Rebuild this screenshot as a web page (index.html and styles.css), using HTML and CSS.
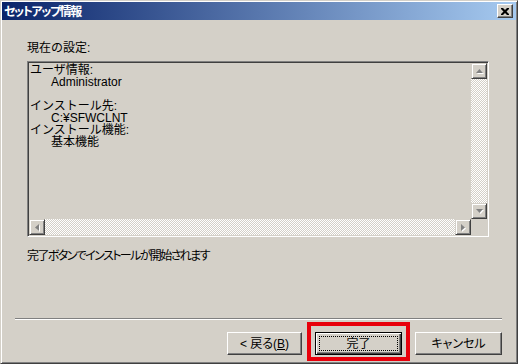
FILE: index.html
```html
<!DOCTYPE html>
<html lang="ja">
<head>
<meta charset="utf-8">
<title>セットアップ情報</title>
<link rel="stylesheet" href="styles.css">
</head>
<body>
<div class="window">
  <div class="titlebar">
    <span class="title">セットアップ情報</span>
    <span class="close"><svg width="8" height="7" viewBox="0 0 8 7"><path d="M0 0h2l2 2 2-2h2v1l-2.5 2.5L8 6v1H6L4 5 2 7H0V6l2.5-2.5L0 1z" fill="#000"/></svg></span>
  </div>
  <div class="main">
    <div class="label">現在の設定:</div>
    <div class="listbox">
      <div class="list-content">
        <div>ユーザ情報:</div>
        <div class="indent">Administrator</div>
        <div>&nbsp;</div>
        <div>インストール先:</div>
        <div class="indent">C:¥SFWCLNT</div>
        <div>インストール機能:</div>
        <div class="indent">基本機能</div>
      </div>
      <div class="vscroll">
        <span class="sbtn"><svg width="7" height="5" viewBox="0 0 7 5"><path d="M3.5 0L7 4H0z" fill="#808080"/></svg></span>
        <span class="track"></span>
        <span class="sbtn"><svg width="7" height="5" viewBox="0 0 7 5"><path d="M0 0h7L3.5 4z" fill="#808080"/></svg></span>
      </div>
      <div class="hscroll">
        <span class="sbtn"><svg width="5" height="7" viewBox="0 0 5 7"><path d="M0 3.5L4 0v7z" fill="#808080"/></svg></span>
        <span class="track"></span>
        <span class="sbtn"><svg width="5" height="7" viewBox="0 0 5 7"><path d="M0 0l4 3.5L0 7z" fill="#808080"/></svg></span>
      </div>
      <div class="corner"></div>
    </div>
    <div class="message">完了ボタンでインストールが開始されます</div>
  </div>
  <div class="footer">
    <div class="separator"></div>
    <div class="buttons">
      <span class="btn back">&lt; 戻る(<u>B</u>)</span>
      <span class="default-wrap">
        <span class="btn default"><span class="focus">完了</span></span>
        <span class="highlight"></span>
      </span>
      <span class="btn cancel">キャンセル</span>
    </div>
  </div>
</div>
</body>
</html>
```
FILE: styles.css
```css
html, body {
  margin: 0;
  background: #d4d0c8;
}
body {
  font-family: "Liberation Sans", "Noto Sans CJK JP", sans-serif;
  font-size: 12px;
  color: #000;
}
.window {
  width: 518px;
  height: 364px;
  box-sizing: border-box;
  border: 1px solid;
  border-color: #d4d0c8 #404040 #404040 #d4d0c8;
  box-shadow: inset 1px 1px #fff, inset -1px -1px #808080;
  padding: 1px;
  display: flex;
  flex-direction: column;
  background: #d4d0c8;
}
.titlebar {
  height: 18px;
  flex: none;
  display: flex;
  align-items: center;
  justify-content: space-between;
  background: linear-gradient(to right, #0a246a, #a6caf0);
  padding: 0 3px 0 2px;
}
.title {
  color: #fff;
  font-weight: bold;
  font-family: "Noto Sans CJK JP", sans-serif;
  font-feature-settings: "palt";
  letter-spacing: -1.4px;
  font-size: 12px;
  line-height: 18px;
}
.close {
  width: 16px;
  height: 14px;
  box-sizing: border-box;
  background: #d4d0c8;
  border: 1px solid;
  border-color: #fff #404040 #404040 #fff;
  box-shadow: inset -1px -1px #808080;
  display: flex;
  align-items: center;
  justify-content: center;
}
.main {
  flex: 1;
  padding: 22px 27px 0 25px;
}
.label {
  line-height: 12px;
  margin-bottom: 7px;
}
.listbox {
  height: 176px;
  box-sizing: border-box;
  border: 1px solid;
  border-color: #808080 #fff #fff #808080;
  box-shadow: inset 1px 1px #404040, inset -1px -1px #d4d0c8;
  padding: 1px;
  display: grid;
  grid-template-columns: 1fr 16px;
  grid-template-rows: 1fr 16px;
  background: #d4d0c8;
}
.list-content {
  padding: 1px 0 0 1px;
  line-height: 12px;
}
.indent {
  padding-left: 21px;
}
.vscroll, .hscroll {
  display: flex;
}
.vscroll {
  flex-direction: column;
}
.track {
  flex: 1;
  background: repeating-conic-gradient(#d4d0c8 0 25%, #fff 0 50%) 0 0 / 2px 2px;
}
.sbtn {
  width: 16px;
  height: 16px;
  flex: none;
  box-sizing: border-box;
  background: #d4d0c8;
  border: 1px solid;
  border-color: #d4d0c8 #404040 #404040 #d4d0c8;
  box-shadow: inset 1px 1px #fff, inset -1px -1px #808080;
  display: flex;
  align-items: center;
  justify-content: center;
}
.sbtn svg {
  filter: drop-shadow(1px 1px 0 #fff);
}
.corner {
  background: #d4d0c8;
}
.message {
  margin-top: 13px;
  line-height: 12px;
  font-feature-settings: "palt";
  letter-spacing: -1.6px;
}
.footer {
  flex: none;
  padding-bottom: 7px;
}
.separator {
  border-top: 1px solid #808080;
  border-bottom: 1px solid #fff;
  margin: 0 14px 0 13px;
}
.buttons {
  display: flex;
  justify-content: flex-end;
  gap: 13px;
  padding: 12px 14px 0 0;
  font-feature-settings: "palt";
}
.btn {
  height: 23px;
  box-sizing: border-box;
  border: 1px solid;
  border-color: #fff #404040 #404040 #fff;
  box-shadow: inset -1px -1px #808080;
  display: flex;
  align-items: center;
  justify-content: center;
  line-height: 12px;
  background: #d4d0c8;
}
.back {
  width: 75px;
}
.cancel {
  width: 87px;
}
.default-wrap {
  position: relative;
  display: flex;
}
.default {
  width: 87px;
  border: 1px solid #000;
  box-shadow: inset 1px 1px #fff, inset -1px -1px #404040, inset -2px -2px #808080;
  padding: 3px;
}
.focus {
  flex: 1;
  align-self: stretch;
  border: 1px dotted #000;
  display: flex;
  align-items: center;
  justify-content: center;
}
.highlight {
  position: absolute;
  left: -8px;
  right: -8px;
  top: -10px;
  bottom: -6px;
  border: 4px solid #e8000b;
  pointer-events: none;
}
```
